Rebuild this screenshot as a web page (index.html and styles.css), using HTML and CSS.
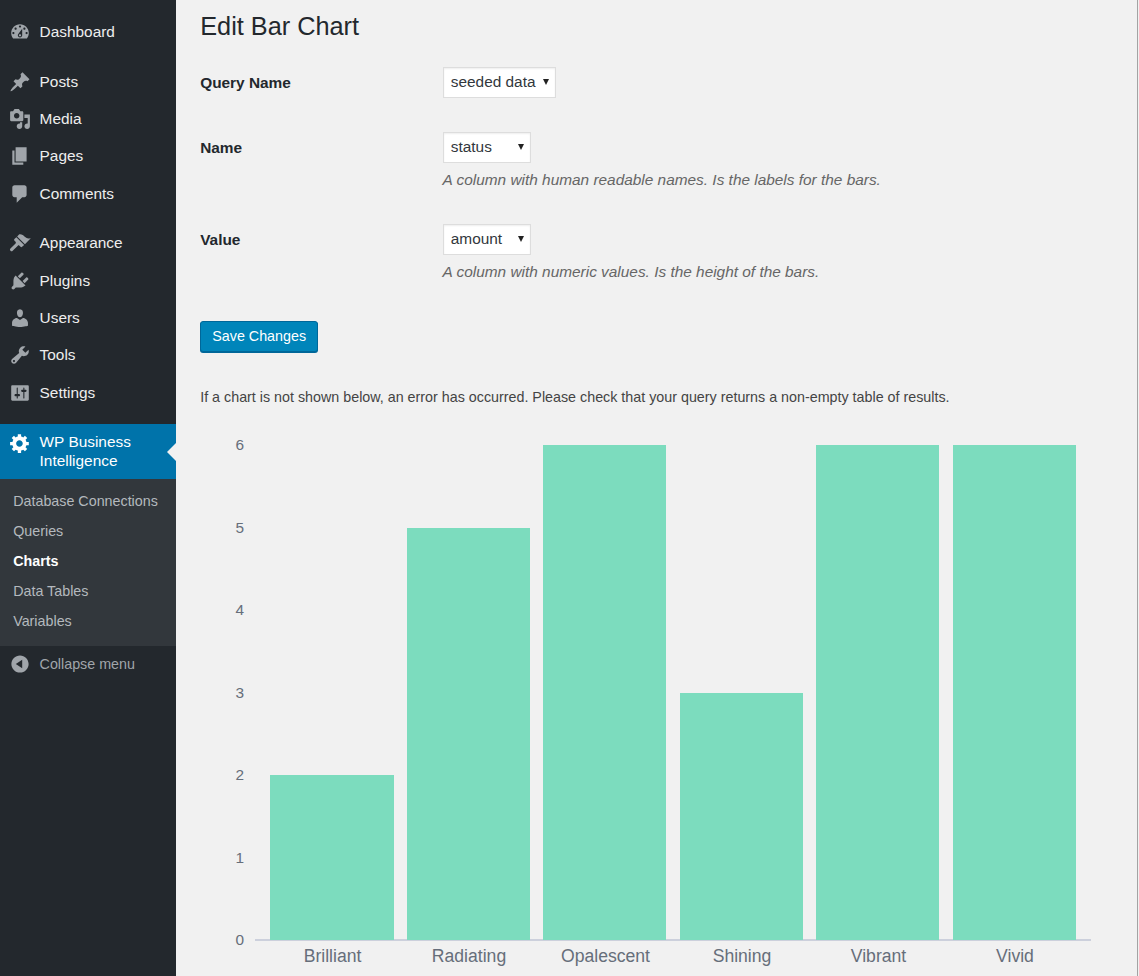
FILE: index.html
```html
<!DOCTYPE html>
<html>
<head>
  <title>Edit Bar Chart</title>
  <link rel="stylesheet" href="styles.css">
</head>
<body>

<div class="layout">
  <nav class="sidebar">
    <ul class="menu first">
      <li class="menu-item"><svg class="icon" viewBox="0 0 20 20"><path fill-rule="evenodd" d="M3.76 16h12.48c1.1-1.37 1.76-3.11 1.76-5 0-4.42-3.58-8-8-8s-8 3.58-8 8c0 1.89.66 3.63 1.76 5zM10 4c.55 0 1 .45 1 1s-.45 1-1 1-1-.45-1-1 .45-1 1-1zM6 6c.55 0 1 .45 1 1s-.45 1-1 1-1-.45-1-1 .45-1 1-1zm8 0c.55 0 1 .45 1 1s-.45 1-1 1-1-.45-1-1 .45-1 1-1zm-5.37 5.55L12 7v6c0 1.1-.9 2-2 2s-2-.9-2-2c0-.57.24-1.08.63-1.45zM4 10c.55 0 1 .45 1 1s-.45 1-1 1-1-.45-1-1 .45-1 1-1zm12 0c.55 0 1 .45 1 1s-.45 1-1 1-1-.45-1-1 .45-1 1-1zm-5 3c0-.55-.45-1-1-1s-1 .45-1 1 .45 1 1 1 1-.45 1-1z"/></svg>Dashboard</li>
    </ul>
    <ul class="menu">
      <li class="menu-item"><svg class="icon" viewBox="0 0 20 20"><path d="M10.44 3.02l1.82-1.82 6.36 6.35-1.83 1.82c-1.05-.68-2.48-.57-3.41.36l-.75.75c-.92.93-1.04 2.35-.35 3.41l-1.83 1.82-2.41-2.41-2.8 2.79c-.42.42-3.38 2.71-3.8 2.29s1.86-3.39 2.28-3.81l2.79-2.79L4.1 9.36l1.83-1.82c1.05.69 2.48.57 3.4-.36l.75-.75c.93-.92 1.05-2.35.36-3.41z"/></svg>Posts</li>
      <li class="menu-item"><svg class="icon" viewBox="0 0 20 20"><path fill-rule="evenodd" d="M13 11V4c0-.55-.45-1-1-1h-1.67L9 1H5L3.67 3H2c-.55 0-1 .45-1 1v7c0 .55.45 1 1 1h10c.55 0 1-.45 1-1zM7 4.5c1.38 0 2.5 1.12 2.5 2.5S8.38 9.5 7 9.5 4.5 8.38 4.5 7 5.62 4.5 7 4.5zM14 6h5v10.5c0 1.38-1.12 2.5-2.5 2.5S14 17.88 14 16.5s1.12-2.5 2.5-2.5c.17 0 .34.02.5.05V9h-3V6zm-4 8.05V13h2v3.5c0 1.38-1.12 2.5-2.5 2.5S7 17.88 7 16.5 8.12 14 9.5 14c.17 0 .34.02.5.05z"/></svg>Media</li>
      <li class="menu-item"><svg class="icon" viewBox="0 0 20 20"><path d="M6 15V2h10v13H6zm-1 1h8v2H3V5h2v11z"/></svg>Pages</li>
      <li class="menu-item"><svg class="icon" viewBox="0 0 20 20"><path d="M5 2h9c1.1 0 2 .9 2 2v7c0 1.1-.9 2-2 2h-2l-5 5v-5H5c-1.1 0-2-.9-2-2V4c0-1.1.9-2 2-2z"/></svg>Comments</li>
    </ul>
    <ul class="menu">
      <li class="menu-item"><svg class="icon" viewBox="0 0 20 20"><path d="M14.48 11.06L7.41 3.99l1.5-1.5c.5-.56 2.3-.47 3.51.32 1.21.8 1.43 1.28 2.91 2.1 1.18.64 2.45 1.26 4.45.85zm-.71.71L6.7 4.7 4.93 6.47c-.39.39-.39 1.02 0 1.41l1.06 1.06c.39.39.39 1.03 0 1.42L1.3 15.05a1.45 1.45 0 0 0 2.05 2.05l4.69-4.69c.39-.39 1.03-.39 1.42 0l1.06 1.06c.39.39 1.02.39 1.41 0z"/></svg>Appearance</li>
      <li class="menu-item"><svg class="icon" viewBox="0 0 20 20"><path d="M13.11 4.36L9.87 7.6 8 5.73l3.24-3.24c.35-.34 1.05-.2 1.56.32.52.51.66 1.21.31 1.55zm-8 1.77l.91-1.12 9.01 9.01-1.19.84c-.71.71-2.63 1.16-3.82 1.16H6.14L4.9 17.26c-.59.59-1.54.59-2.12 0-.59-.58-.59-1.53 0-2.12l1.24-1.24v-3.88c0-1.13.4-3.19 1.09-3.89zm7.26 3.97l3.24-3.24c.34-.35 1.04-.21 1.55.31.52.51.66 1.21.31 1.55l-3.24 3.25z"/></svg>Plugins</li>
      <li class="menu-item"><svg class="icon" viewBox="0 0 20 20"><path d="M10 9.25c-2.27 0-2.73-3.44-2.73-3.44C7 4.02 7.82 2 9.97 2c2.16 0 2.98 2.02 2.71 3.81 0 0-.41 3.44-2.68 3.44zm0 2.57L12.72 10c2.39 0 4.52 2.33 4.52 4.53v2.49s-3.65 1.13-7.24 1.13c-3.65 0-7.24-1.13-7.24-1.13v-2.49c0-2.25 1.94-4.48 4.47-4.48z"/></svg>Users</li>
      <li class="menu-item"><svg class="icon" viewBox="0 0 20 20"><path fill-rule="evenodd" d="M16.68 9.77c-1.34 1.34-3.3 1.67-4.95.99l-5.41 6.52c-.99.99-2.59.99-3.58 0s-.99-2.59 0-3.57l6.52-5.42c-.68-1.65-.35-3.61.99-4.95 1.28-1.28 3.12-1.62 4.72-1.06l-2.89 2.89 2.82 2.82 2.86-2.87c.53 1.58.18 3.39-1.08 4.65zM3.81 16.21c.4.39 1.04.39 1.43 0 .4-.4.4-1.04 0-1.43-.39-.4-1.03-.4-1.43 0-.39.39-.39 1.03 0 1.43z"/></svg>Tools</li>
      <li class="menu-item"><svg class="icon" viewBox="0 0 20 20"><path fill-rule="evenodd" d="M18 16V4c0-.55-.45-1-1-1H3c-.55 0-1 .45-1 1v12c0 .55.45 1 1 1h14c.55 0 1-.45 1-1zM8 11h1c.55 0 1 .45 1 1s-.45 1-1 1H8v1.5c0 .28-.22.5-.5.5s-.5-.22-.5-.5V13H6c-.55 0-1-.45-1-1s.45-1 1-1h1V5.5c0-.28.22-.5.5-.5s.5.22.5.5V11zm5-2h-1c-.55 0-1-.45-1-1s.45-1 1-1h1V5.5c0-.28.22-.5.5-.5s.5.22.5.5V7h1c.55 0 1 .45 1 1s-.45 1-1 1h-1v5.5c0 .28-.22.5-.5.5s-.5-.22-.5-.5V9z"/></svg>Settings</li>
    </ul>
    <div class="menu-current"><svg class="icon" viewBox="0 0 20 20"><path fill-rule="evenodd" d="M18 12h-2.18c-.17.7-.44 1.35-.81 1.93l1.54 1.54-2.1 2.1-1.54-1.54c-.58.36-1.23.63-1.91.79V19H8v-2.18c-.68-.16-1.33-.43-1.91-.79l-1.54 1.54-2.12-2.12 1.54-1.54c-.36-.58-.63-1.23-.79-1.91H1V9.03h2.17c.16-.7.44-1.35.8-1.94L2.43 5.55l2.1-2.1 1.54 1.54c.58-.37 1.24-.64 1.93-.81V2h3v2.18c.68.16 1.33.43 1.91.79l1.54-1.54 2.12 2.12-1.54 1.54c.36.59.64 1.24.8 1.94H18V12zm-8.5 1.5c1.66 0 3-1.34 3-3s-1.34-3-3-3-3 1.34-3 3 1.34 3 3 3z"/></svg><span>WP Business Intelligence</span></div>
    <ul class="submenu">
      <li>Database Connections</li>
      <li>Queries</li>
      <li class="current">Charts</li>
      <li>Data Tables</li>
      <li>Variables</li>
    </ul>
    <div class="collapse"><svg class="icon" viewBox="0 0 20 20"><path fill-rule="evenodd" d="M10 2.16c4.33 0 7.84 3.51 7.84 7.84s-3.51 7.84-7.84 7.84S2.16 14.33 2.16 10 5.71 2.16 10 2.16zm2 11.72V6.12L6.18 9.97z"/></svg>Collapse menu</div>
  </nav>

  <main class="content">
    <h1>Edit Bar Chart</h1>
    <div class="field-row">
      <label class="field-label">Query Name</label>
      <div class="field">
        <div class="select select-wide">seeded data</div>
      </div>
    </div>
    <div class="field-row">
      <label class="field-label">Name</label>
      <div class="field">
        <div class="select">status</div>
        <p class="description">A column with human readable names. Is the labels for the bars.</p>
      </div>
    </div>
    <div class="field-row">
      <label class="field-label">Value</label>
      <div class="field">
        <div class="select">amount</div>
        <p class="description">A column with numeric values. Is the height of the bars.</p>
      </div>
    </div>
    <button class="button-primary" type="button">Save Changes</button>
    <p class="notice">If a chart is not shown below, an error has occurred. Please check that your query returns a non-empty table of results.</p>

    <svg class="chart" width="939" height="556" viewBox="200 420 939 556">
      <rect class="axis" x="255" y="939" width="836" height="2"/>
      <rect class="bar" x="270" y="775" width="124" height="165"/>
      <rect class="bar" x="407" y="528" width="123" height="412"/>
      <rect class="bar" x="543" y="445" width="123" height="495"/>
      <rect class="bar" x="680" y="693" width="123" height="247"/>
      <rect class="bar" x="816" y="445" width="123" height="495"/>
      <rect class="bar" x="953" y="445" width="123" height="495"/>
      <text class="y-label" x="244" y="450">6</text>
      <text class="y-label" x="244" y="533">5</text>
      <text class="y-label" x="244" y="615">4</text>
      <text class="y-label" x="244" y="698">3</text>
      <text class="y-label" x="244" y="780">2</text>
      <text class="y-label" x="244" y="863">1</text>
      <text class="y-label" x="244" y="945">0</text>
      <text class="x-label" x="332.5" y="962">Brilliant</text>
      <text class="x-label" x="469" y="962">Radiating</text>
      <text class="x-label" x="605.5" y="962">Opalescent</text>
      <text class="x-label" x="742" y="962">Shining</text>
      <text class="x-label" x="878.5" y="962">Vibrant</text>
      <text class="x-label" x="1015" y="962">Vivid</text>
    </svg>
  </main>
</div>

</body>
</html>
```

FILE: styles.css
```css
html, body {
  height: 100%;
}
body {
  margin: 0;
  background: #f1f1f1;
  color: #444;
  font-family: "Liberation Sans", Arial, sans-serif;
  font-size: 14.3px;
  overflow: hidden;
}
.layout {
  display: flex;
  height: 976px;
}
.sidebar {
  width: 176px;
  flex-shrink: 0;
  background: #23282d;
  color: #eee;
  padding-top: 13px;
  box-sizing: border-box;
}
.menu {
  list-style: none;
  margin: 0 0 12.6px 0;
  padding: 0;
}
.menu:nth-of-type(2) {
  margin-bottom: 11.9px;
}
.menu-item {
  display: flex;
  align-items: center;
  height: 37.4px;
  font-size: 15.4px;
}
.icon {
  width: 22px;
  height: 22px;
  margin: 0 8.8px;
  flex-shrink: 0;
  fill: #a0a5aa;
}
.menu-current {
  position: relative;
  display: flex;
  align-items: flex-start;
  height: 55px;
  padding-top: 8px;
  box-sizing: border-box;
  background: #0073aa;
  color: #fff;
  font-size: 15.4px;
  line-height: 19px;
}
.menu-current .icon {
  fill: #fff;
}
.menu-current span {
  width: 110px;
}
.menu-current::after {
  content: "";
  position: absolute;
  right: 0;
  top: 19px;
  border: 9px solid transparent;
  border-left: 0;
  border-right-color: #f1f1f1;
}
.submenu {
  list-style: none;
  margin: 0;
  padding: 7px 0 10px 0;
  background: #32373c;
  color: #b4b9be;
  font-size: 14.3px;
}
.submenu li {
  height: 30px;
  line-height: 30px;
  padding-left: 13.2px;
}
.submenu .current {
  color: #fff;
  font-weight: bold;
}
.collapse {
  display: flex;
  align-items: center;
  height: 36px;
  color: #a0a5aa;
  font-size: 14.3px;
}
.content {
  flex: 1;
  padding-left: 24.2px;
  border-right: 1px solid #a3a3a3;
  margin-right: 1px;
}
h1 {
  margin: 0;
  padding-top: 11px;
  font-size: 25.3px;
  line-height: 30px;
  font-weight: 400;
  color: #23282d;
}
.field-row {
  display: flex;
}
.field-row:nth-of-type(1) {
  margin-top: 26px;
  height: 65px;
}
.field-row:nth-of-type(2) {
  height: 92px;
}
.field-row:nth-of-type(3) {
  height: 97px;
}
.field-label {
  width: 242.6px;
  padding-top: 1px;
  font-weight: bold;
  color: #23282d;
  font-size: 15.4px;
  line-height: 30px;
}
.select {
  position: relative;
  width: 88px;
  height: 31px;
  box-sizing: border-box;
  border: 1px solid #ddd;
  background: #fff;
  color: #32373c;
  font-size: 15.4px;
  line-height: 27px;
  padding-left: 7px;
  box-shadow: inset 0 1px 2px rgba(0, 0, 0, 0.07);
}
.select::after {
  content: "";
  position: absolute;
  right: 6px;
  top: 11px;
  border: 3px solid transparent;
  border-top: 6px solid #222;
  border-bottom: 0;
}
.select-wide {
  width: 113px;
}
.description {
  margin: 7px 0 0 -0.2px;
  font-size: 15.4px;
  font-style: italic;
  line-height: 20px;
  color: #666;
}
.button-primary {
  display: block;
  width: 118px;
  height: 31px;
  padding: 0 0 2px 0;
  background: #0085ba;
  border: 1px solid #006799;
  border-radius: 3px;
  box-shadow: 0 1px 0 #006799;
  color: #fff;
  font-family: inherit;
  font-size: 14.3px;
}
.notice {
  margin: 35px 0 0 0;
  font-size: 14.3px;
  line-height: 20px;
}
.chart {
  position: absolute;
  left: 200px;
  top: 420px;
}
.bar {
  fill: #7cdcbe;
}
.axis {
  fill: #ccd0dc;
}
.y-label {
  fill: #666e7a;
  font-size: 15.4px;
  text-anchor: end;
}
.x-label {
  fill: #666e7a;
  font-size: 17.6px;
  text-anchor: middle;
}
```
